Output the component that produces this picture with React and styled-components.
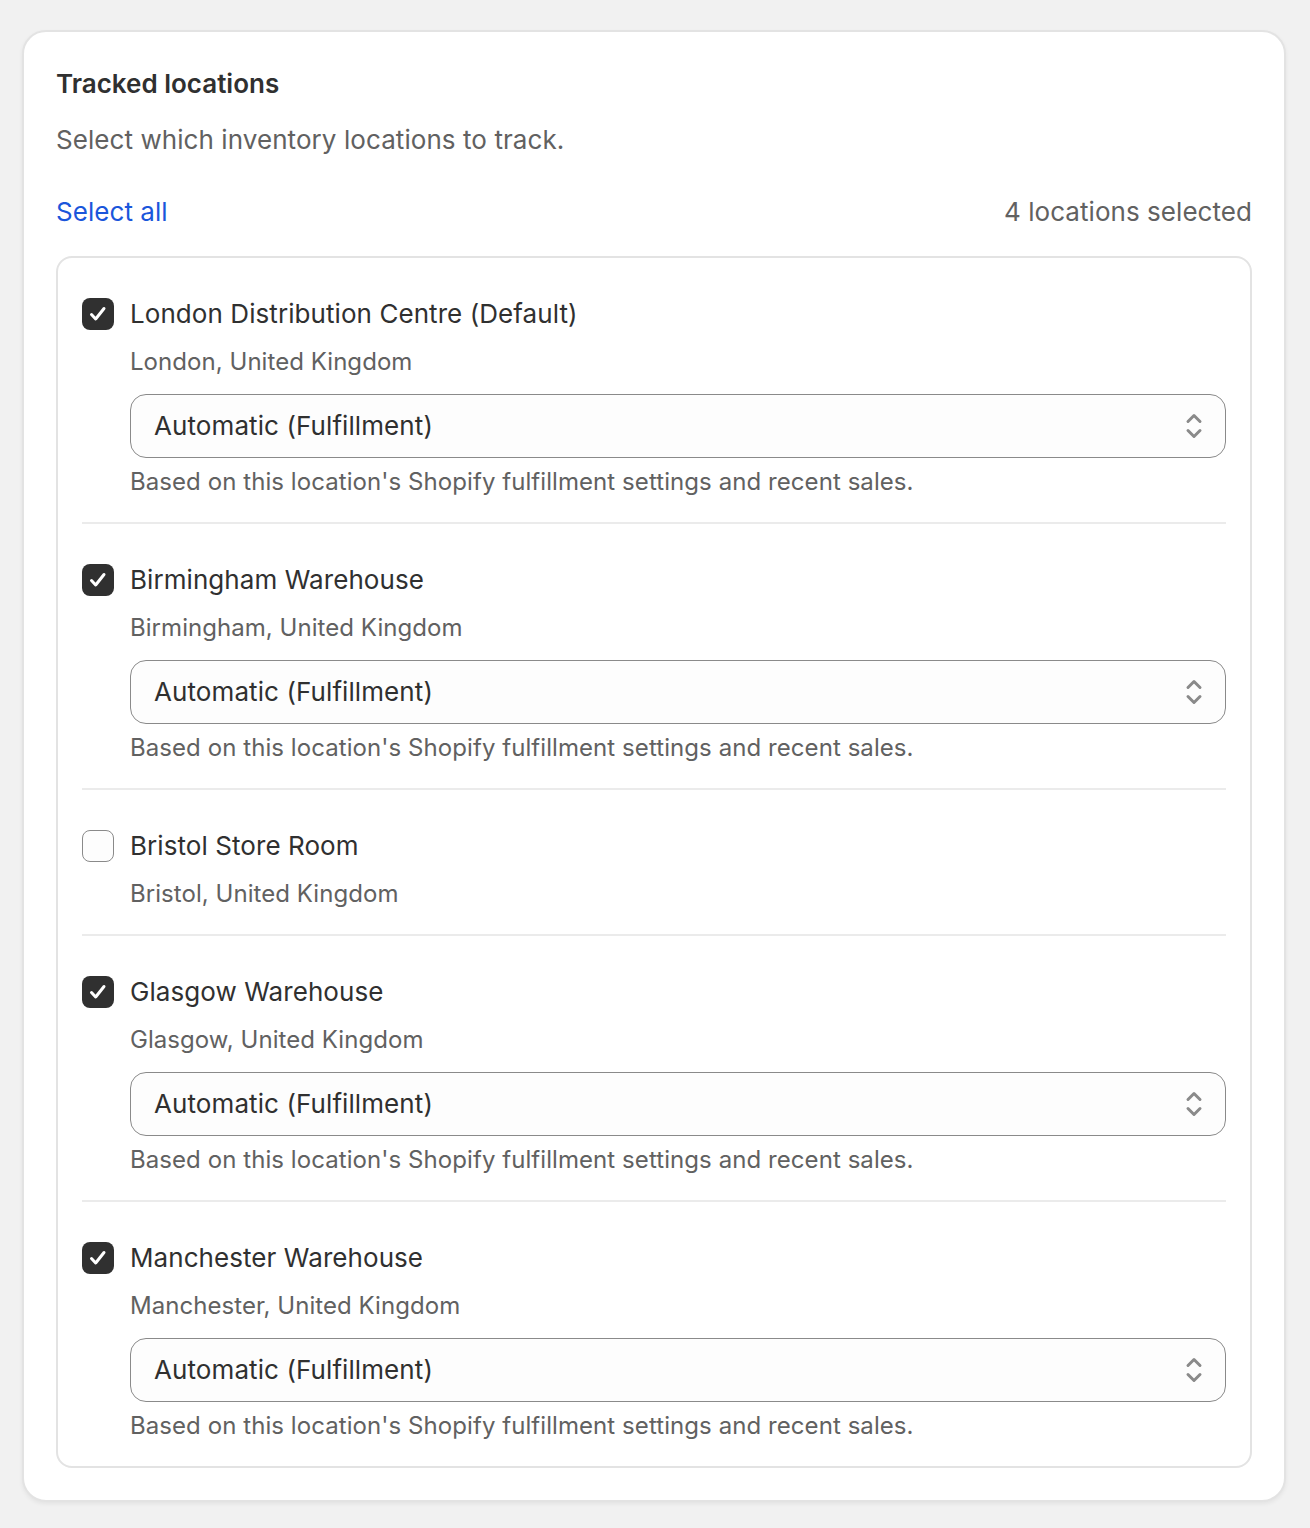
import React from 'react';
import styled, { createGlobalStyle } from 'styled-components';

const GlobalStyle = createGlobalStyle`
  html, body {
    margin: 0;
    padding: 0;
    background: #f1f1f1;
  }
  * {
    box-sizing: border-box;
  }
`;

const locations = [
  { id: 1, name: 'London Distribution Centre (Default)', place: 'London, United Kingdom', checked: true },
  { id: 2, name: 'Birmingham Warehouse', place: 'Birmingham, United Kingdom', checked: true },
  { id: 3, name: 'Bristol Store Room', place: 'Bristol, United Kingdom', checked: false },
  { id: 4, name: 'Glasgow Warehouse', place: 'Glasgow, United Kingdom', checked: true },
  { id: 5, name: 'Manchester Warehouse', place: 'Manchester, United Kingdom', checked: true }
];

export default function App() {
  return (
    <Page>
      <GlobalStyle />
      <Card>
        <Title>Tracked locations</Title>
        <Subtitle>Select which inventory locations to track.</Subtitle>
        <Toolbar>
          <SelectAll href="#">Select all</SelectAll>
          <Count>4 locations selected</Count>
        </Toolbar>
        <List>
          {locations.map((item) => (
            <Row key={item.id}>
              <NameLine>
                <Checkbox $checked={item.checked}>
                  {item.checked && (
                    <svg width="20" height="20" viewBox="0 0 20 20" fill="none">
                      <path d="M3.5 10.5L7.7 15L16 4.5" stroke="#fff" strokeWidth="3" strokeLinecap="round" strokeLinejoin="round" />
                    </svg>
                  )}
                </Checkbox>
                <Name>{item.name}</Name>
              </NameLine>
              <Details>
                <Place>{item.place}</Place>
                {item.checked && (
                  <>
                    <SelectBox>
                      <SelectLabel>Automatic (Fulfillment)</SelectLabel>
                      <svg width="18" height="28" viewBox="0 0 18 28" fill="none">
                        <path d="M3 9.5L9 3.5L15 9.5M3 18.5L9 24.5L15 18.5" stroke="#8a8a8a" strokeWidth="3" strokeLinecap="round" strokeLinejoin="round" />
                      </svg>
                    </SelectBox>
                    <Hint>Based on this location's Shopify fulfillment settings and recent sales.</Hint>
                  </>
                )}
              </Details>
            </Row>
          ))}
        </List>
      </Card>
    </Page>
  );
}

const Page = styled.div`
  width: 1310px;
  min-height: 1528px;
  padding: 30px 24px 26px 22px;
  background: #f1f1f1;
  font-family: Inter, 'Liberation Sans', sans-serif;
`;

const Card = styled.div`
  height: 1472px;
  padding: 32px 32px 30px;
  background: #fff;
  border: 2px solid #e3e3e3;
  border-radius: 24px;
  box-shadow: 0 2px 4px rgba(0, 0, 0, 0.06);
`;

const Title = styled.h2`
  margin: 0;
  height: 40px;
  font-size: 26px;
  line-height: 40px;
  font-weight: 600;
  color: #303030;
`;

const Subtitle = styled.p`
  margin: 16px 0 0;
  font-size: 26px;
  line-height: 40px;
  letter-spacing: 0.07px;
  color: #616161;
`;

const Toolbar = styled.div`
  display: flex;
  justify-content: space-between;
  margin-top: 32px;
  font-size: 26px;
  line-height: 40px;
  letter-spacing: 0.05px;
`;

const SelectAll = styled.a`
  color: #1a56db;
  text-decoration: none;
`;

const Count = styled.span`
  color: #616161;
`;

const List = styled.div`
  margin-top: 24px;
  padding: 0 24px;
  border: 2px solid #e3e3e3;
  border-radius: 16px;
`;

const Row = styled.div`
  padding: 36px 0 20px;
  border-bottom: 2px solid #ebebeb;

  &:last-child {
    border-bottom: none;
  }
`;

const NameLine = styled.div`
  display: flex;
  align-items: center;
  gap: 16px;
  height: 40px;
`;

const Checkbox = styled.span`
  display: flex;
  align-items: center;
  justify-content: center;
  flex: none;
  width: 32px;
  height: 32px;
  border-radius: 8px;
  background: ${(props) => (props.$checked ? '#303030' : '#fdfdfd')};
  border: ${(props) => (props.$checked ? 'none' : '1.5px solid #8a8a8a')};
`;

const Name = styled.span`
  font-size: 26px;
  line-height: 40px;
  letter-spacing: 0.07px;
  color: #303030;
`;

const Details = styled.div`
  margin-left: 48px;
`;

const Place = styled.div`
  margin-top: 8px;
  font-size: 24px;
  line-height: 40px;
  letter-spacing: 0.05px;
  color: #616161;
`;

const SelectBox = styled.div`
  display: flex;
  align-items: center;
  justify-content: space-between;
  height: 64px;
  margin-top: 12px;
  padding: 0 22px 0 23px;
  background: #fdfdfd;
  border: 1.5px solid #8a8a8a;
  border-radius: 16px;
  font-size: 26px;
  letter-spacing: 0.09px;
  color: #303030;
`;

const SelectLabel = styled.span`
  margin-bottom: 2px;
`;

const Hint = styled.div`
  margin-top: 4px;
  font-size: 24px;
  line-height: 40px;
  letter-spacing: 0.07px;
  color: #616161;
`;
